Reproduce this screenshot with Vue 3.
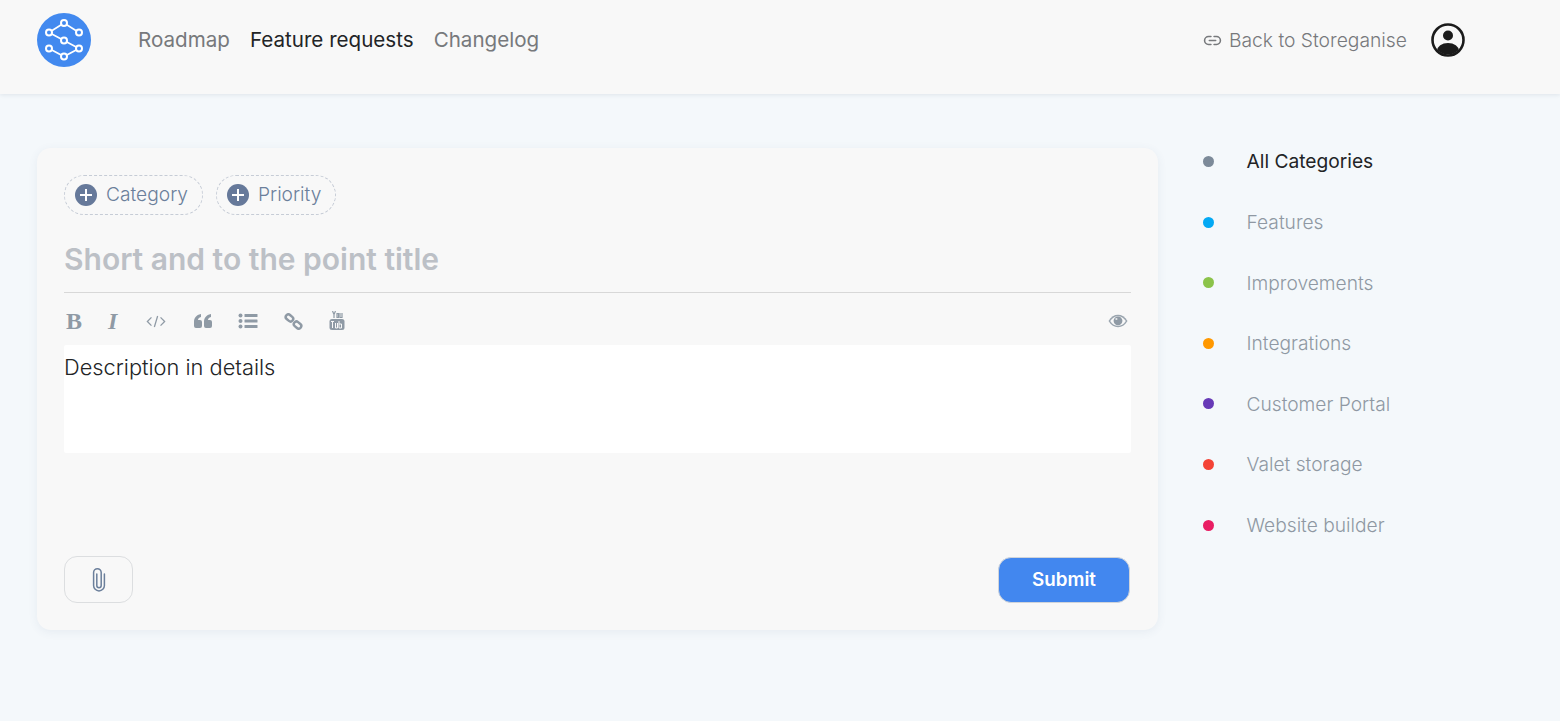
<script setup>
const links = [
  { label: 'Roadmap', active: false },
  { label: 'Feature requests', active: true },
  { label: 'Changelog', active: false },
]
const categories = [
  { name: 'All Categories', color: '#7c8a99', active: true },
  { name: 'Features', color: '#03a9f4' },
  { name: 'Improvements', color: '#8bc34a' },
  { name: 'Integrations', color: '#ff9800' },
  { name: 'Customer Portal', color: '#673ab7' },
  { name: 'Valet storage', color: '#f44336' },
  { name: 'Website builder', color: '#e91e63' },
]
</script>

<template>
  <div class="page">
    <header class="topbar">
      <div class="left">
        <svg class="logo" viewBox="0 0 54 54" width="54" height="54">
          <circle cx="27" cy="27" r="27" fill="#4289ef" />
          <g fill="none" stroke="#fff" stroke-width="1.7">
            <path d="M12 19.500 27 10 42 19.500M12 19.500 27 27.500 42 35.500 27 43.500 12 35.500" />
          </g>
          <g fill="#4289ef" stroke="#fff" stroke-width="2">
            <circle cx="12" cy="19.500" r="3" /><circle cx="27" cy="10" r="3" /><circle cx="42" cy="19.500" r="3" />
            <circle cx="27" cy="27.500" r="3" />
            <circle cx="12" cy="35.500" r="3" /><circle cx="27" cy="43.500" r="3" /><circle cx="42" cy="35.500" r="3" />
          </g>
        </svg>
        <nav class="nav">
          <a v-for="l in links" :key="l.label" :class="{ active: l.active }">{{ l.label }}</a>
        </nav>
      </div>
      <div class="right">
        <a class="back">
          <svg viewBox="0 0 24 24" width="19" height="19" fill="none" stroke="#77797c" stroke-width="2" stroke-linecap="round">
            <path d="M10 7H7a5 5 0 0 0 0 10h3M14 7h3a5 5 0 0 1 0 10h-3M8 12h8" />
          </svg>
          Back to Storeganise
        </a>
        <svg class="user" viewBox="0 0 34 34" width="34" height="34">
          <defs><clipPath id="uc"><circle cx="17" cy="17" r="14.500" /></clipPath></defs>
          <circle cx="17" cy="17" r="15.500" fill="none" stroke="#1b1b1b" stroke-width="2.600" />
          <circle cx="17" cy="12.500" r="5" fill="#1b1b1b" />
          <ellipse cx="17" cy="28" rx="11" ry="8" fill="#1b1b1b" clip-path="url(#uc)" />
        </svg>
      </div>
    </header>

    <main class="content">
      <section class="card">
        <div class="chips">
          <button class="chip"><span class="plus"></span><span class="chip-text">Category</span></button>
          <button class="chip"><span class="plus"></span><span class="chip-text">Priority</span></button>
        </div>
        <div class="title">Short and to the point title</div>
        <div class="toolbar">
          <div class="tools">
            <span class="tool serif-b">B</span>
            <span class="tool serif-i">I</span>
            <svg class="tool code" viewBox="0 0 22 16" width="20" height="15" fill="none" stroke="#8f9aa5" stroke-width="1.400">
              <path d="M6 3.500 1.500 8 6 12.500M16 3.500 20.500 8 16 12.500M12.800 2 9.200 14" />
            </svg>
            <svg class="tool" viewBox="0 0 20 16" width="20" height="16" fill="#8f9aa5">
              <path d="M1 9c0-4 2-7 7-8v3C6 4.500 5 5.500 5 7h2a2 2 0 0 1 2 2v4a2 2 0 0 1-2 2H3a2 2 0 0 1-2-2zM11 9c0-4 2-7 7-8v3c-2 .5-3 1.500-3 3h2a2 2 0 0 1 2 2v4a2 2 0 0 1-2 2h-4a2 2 0 0 1-2-2z" />
            </svg>
            <svg class="tool" viewBox="0 0 20 16" width="20" height="16" fill="#8f9aa5">
              <circle cx="2.500" cy="2.500" r="2" /><circle cx="2.500" cy="8" r="2" /><circle cx="2.500" cy="13.500" r="2" />
              <rect x="6.500" y="1" width="13" height="3" rx=".5" /><rect x="6.500" y="6.500" width="13" height="3" rx=".5" /><rect x="6.500" y="12" width="13" height="3" rx=".5" />
            </svg>
            <svg class="tool link" viewBox="0 0 20 18" width="19" height="17" fill="none" stroke="#8f9aa5" stroke-width="2.600">
              <rect x="1.500" y="2.500" width="8.500" height="5.500" rx="2.700" transform="rotate(40 5.750 5.200)" />
              <rect x="10" y="10" width="8.500" height="5.500" rx="2.700" transform="rotate(40 14.250 12.800)" />
            </svg>
            <svg class="tool" viewBox="0 0 16 20" width="16" height="20">
              <rect x=".5" y="8" width="15" height="11" rx="2.500" fill="#8f9aa5" />
              <g fill="none" stroke="#8f9aa5" stroke-width="1.200">
                <path d="M3.500 0 5 3.500 6.500 0M5 3.500V7M8 2.500h1.500v4H8zM11 2v4.500h2V2" />
              </g>
              <g fill="none" stroke="#f8f8f8" stroke-width="1">
                <path d="M2 10.500h3M3.500 10.500V17M6.500 12v5h2v-5M10 10v7M10 13h2.500v4H10" />
              </g>
            </svg>
          </div>
          <svg viewBox="0 0 20 14" width="20" height="14">
            <path d="M.5 7C3 2.700 6.300.8 10 .8S17 2.700 19.500 7C17 11.300 13.700 13.200 10 13.200S3 11.300.5 7z" fill="#9aa5af" />
            <path d="M2.200 7C4.300 3.700 7 2.200 10 2.200s5.700 1.500 7.800 4.800c-2.100 3.300-4.800 4.800-7.800 4.800S4.300 10.300 2.200 7z" fill="#f8f8f8" />
            <circle cx="10" cy="6.800" r="4.400" fill="#8f9aa5" />
            <circle cx="8.400" cy="5" r="1.100" fill="#e4e7ea" />
          </svg>
        </div>
        <div class="editor">Description in details</div>
        <div class="footer">
          <button class="attach">
            <svg viewBox="0 0 16 26" width="16" height="26" fill="none" stroke="#6b7f9b" stroke-width="1.500" stroke-linecap="round">
              <path d="M5.800 7v11.500a2.200 2.200 0 0 0 4.400 0V5.500a3.800 3.800 0 0 0-7.600 0v13a5.400 5.400 0 0 0 10.800 0V7" />
            </svg>
          </button>
          <button class="submit">Submit</button>
        </div>
      </section>

      <aside class="side">
        <a v-for="c in categories" :key="c.name" class="cat" :class="{ active: c.active }">
          <span class="dot" :style="{ background: c.color }"></span>{{ c.name }}
        </a>
      </aside>
    </main>
  </div>
</template>

<style>
html, body { margin: 0; background: #f4f8fb; }
</style>

<style scoped>
.page {
  min-height: 721px;
  background: #f4f8fb;
  font-family: Inter, "Liberation Sans", sans-serif;
}
.topbar {
  height: 94px;
  box-sizing: border-box;
  background: #f8f8f8;
  box-shadow: 0 1px 4px rgba(40, 60, 90, 0.1);
  display: flex;
  align-items: flex-start;
  justify-content: space-between;
  padding: 13px 95px 0 37px;
}
.left, .right { display: flex; align-items: center; height: 54px; }
.nav { display: flex; gap: 20px; margin-left: 47px; font-size: 20.600px; color: #77797c; }
.nav .active { color: #222426; }
.nav a { line-height: 54px; }
.back {
  display: flex;
  align-items: center;
  gap: 7px;
  font-size: 19.300px;
  font-weight: 300;
  color: #77797c;
}
.user { margin-left: 24px; }
.content {
  display: flex;
  align-items: flex-start;
  padding: 37px 0 0 37px;
}
.card {
  width: 1121px;
  height: 482px;
  margin-top: 17px;
  box-sizing: border-box;
  background: #f8f8f8;
  border-radius: 14px;
  box-shadow: 0 2px 10px rgba(60, 90, 130, 0.08);
  padding: 27px;
  display: flex;
  flex-direction: column;
}
.chips { display: flex; gap: 13px; }
.chip {
  height: 40px;
  box-sizing: border-box;
  border: 1px dashed #c6ccd6;
  border-radius: 20px;
  background: none;
  display: flex;
  align-items: center;
  gap: 9px;
  padding: 0 14px 0 10px;
  font: 300 19.200px Inter, "Liberation Sans", sans-serif;
  color: #6b7f9b;
}
.chip-text { padding-bottom: 2px; }
.plus {
  width: 22px;
  height: 22px;
  border-radius: 50%;
  background: linear-gradient(#fff, #fff) center / 12px 2px no-repeat,
    linear-gradient(#fff, #fff) center / 2px 12px no-repeat, #66799a;
}
.title {
  margin-top: 26px;
  height: 51px;
  line-height: 36px;
  font-size: 30px;
  font-weight: 600;
  color: #bcc0c6;
  border-bottom: 1px solid #d8d8d8;
}
.toolbar {
  height: 52px;
  box-sizing: border-box;
  padding: 4px 3px 0 2px;
  display: flex;
  align-items: center;
  justify-content: space-between;
}
.tools { display: flex; align-items: center; gap: 25px; }
.serif-b, .serif-i {
  font-family: "Liberation Serif", serif;
  font-size: 24px;
  line-height: 24px;
  color: #8f9aa5;
  width: 17px;
}
.serif-b { font-weight: 700; }
.serif-i { font-style: italic; font-weight: 700; width: 14px; }
.code { margin-left: -1px; margin-right: 2px; }
.link { margin-left: 1px; margin-right: 1px; }
.editor {
  height: 108px;
  box-sizing: border-box;
  background: #fff;
  border-radius: 2px;
  font-size: 21.800px;
  font-weight: 300;
  line-height: 45px;
  color: #222426;
}
.footer {
  margin-top: auto;
  display: flex;
  align-items: center;
  justify-content: space-between;
}
.attach {
  width: 69px;
  height: 47px;
  box-sizing: border-box;
  border: 1px solid #dcdee0;
  border-radius: 13px;
  background: none;
  display: flex;
  align-items: center;
  justify-content: center;
  padding: 0;
}
.submit {
  width: 132px;
  height: 46px;
  box-sizing: border-box;
  margin-right: 1px;
  padding: 0 0 1px;
  border: 1px solid #d0d4da;
  border-radius: 13px;
  background: #4287ef;
  color: #fff;
  font: 600 18.800px Inter, "Liberation Sans", sans-serif;
}
.side {
  margin-left: 45px;
  margin-top: 0.200px;
  display: flex;
  flex-direction: column;
}
.cat {
  height: 60.600px;
  display: flex;
  align-items: center;
  font-size: 19.200px;
  font-weight: 300;
  color: #8f98a3;
}
.cat.active { color: #222426; font-weight: 400; }
.dot { width: 11px; height: 11px; border-radius: 50%; margin-right: 32.500px; }
</style>
